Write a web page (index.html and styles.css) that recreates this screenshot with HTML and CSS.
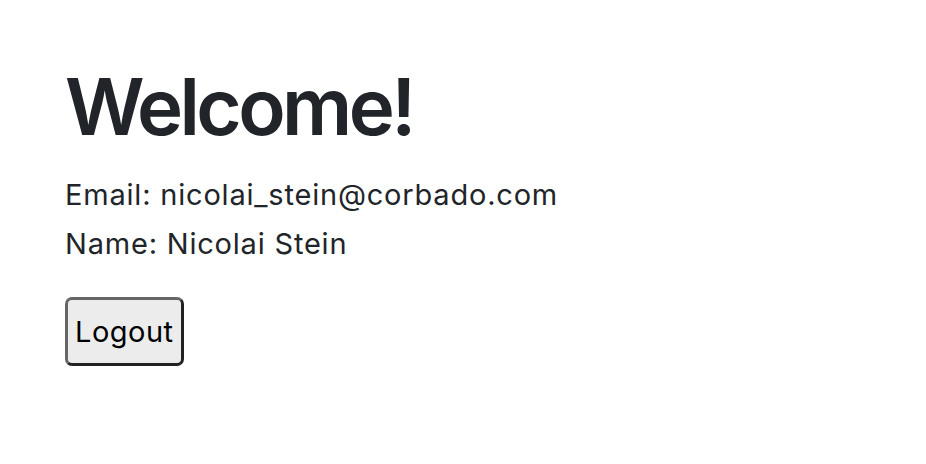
FILE: index.html
```html
<!DOCTYPE html>
<html lang="en">
<head>
    <meta charset="UTF-8">
    <meta name="viewport" content="width=device-width, initial-scale=1.0">
    <title>Profile</title>
    <link rel="stylesheet" href="styles.css">
</head>
<body>

    <!-- profile -->
    <div class="profile">
        <h1>Welcome!</h1>
        <p>Email: nicolai_stein@corbado.com</p>
        <p>Name: Nicolai Stein</p>
        <button class="logout">Logout</button>
    </div>

</body>
</html>
```

FILE: styles.css
```css
body { margin: 0; font-family: Inter, "Liberation Sans", Arial, sans-serif; color: #212529; background: #fff; }

.profile { padding: 60px 65px; }
.profile h1 { font-size: 78px; font-weight: 600; letter-spacing: -3.6px; line-height: 1.2; margin: 0 0 16px; }
.profile p { font-size: 29px; letter-spacing: 0.8px; line-height: 49px; margin: 0; }

/* logout button */
.logout { margin-top: 29px; font-family: inherit; font-size: 29px; letter-spacing: 0.5px; color: #000; background: #ececec; border: 3px solid #666; border-bottom-color: #222; border-right-color: #222; border-radius: 7px; padding: 14px 7px; }
```
